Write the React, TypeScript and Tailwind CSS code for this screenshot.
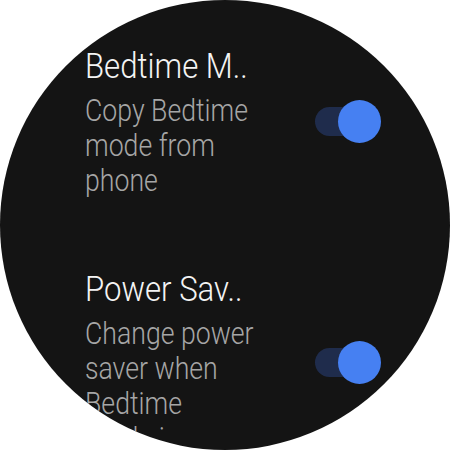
export default function App() {
  const rows = [
    { title: "Bedtime M..", body: "Copy Bedtime mode from phone" },
    { title: "Power Sav..", body: "Change power saver when Bedtime mode is on" },
  ];

  return (
    <div className="h-[450px] w-[450px] bg-white">
      <div
        className="h-[450px] w-[450px] overflow-hidden rounded-full bg-[#141414] pt-[45px] pl-[85px] pr-[69px]"
        style={{ fontFamily: "Roboto, 'Liberation Sans', sans-serif" }}
      >
        <div className="flex h-[387px] flex-col gap-[70px] overflow-hidden">
          {rows.map((r) => (
            <div key={r.title} className="flex shrink-0 items-center">
              <div className="w-[197px] font-light">
                <div className="origin-left scale-x-[0.89] whitespace-nowrap text-[35px] leading-[44px] text-[#f4f4f4]">
                  {r.title}
                </div>
                <div className="mt-[4px] origin-left scale-x-[0.86] text-[31px] leading-[35px] text-[#a6a6a6]">
                  {r.body}
                </div>
              </div>
              <div className="relative ml-auto h-[43px] w-[66px]">
                <div className="absolute left-0 top-[7px] h-[29px] w-[48px] rounded-full bg-[#1f2c4c]" />
                <div className="absolute right-0 top-0 h-[43px] w-[43px] rounded-full bg-[#4680f2]" />
              </div>
            </div>
          ))}
        </div>
      </div>
    </div>
  );
}
